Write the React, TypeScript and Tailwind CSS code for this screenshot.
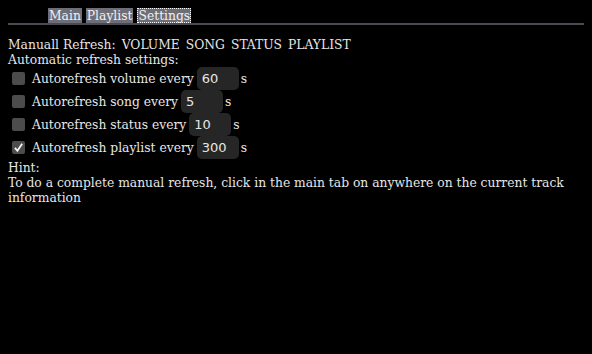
import { useState } from 'react';

type Row = { key: string; label: string; value: string; checked: boolean };

const rows: Row[] = [
  { key: 'volume', label: 'Autorefresh volume every', value: '60', checked: false },
  { key: 'song', label: 'Autorefresh song every', value: '5', checked: false },
  { key: 'status', label: 'Autorefresh status every', value: '10', checked: false },
  { key: 'playlist', label: 'Autorefresh playlist every', value: '300', checked: true },
];

export default function App() {
  const [tab] = useState('Settings');

  return (
    <div className="min-h-[354px] bg-black px-2 pt-2 text-[13.7px] leading-[15px] text-[#e6e6e6] [font-family:'DejaVu_Serif_Condensed','DejaVu_Serif',serif] [font-stretch:condensed]">
      <div className="flex gap-[4px] border-b-2 border-[#4a4a52] pl-10">
        {['Main', 'Playlist', 'Settings'].map((t) => (
          <span
            key={t}
            className={
              'bg-[#6e6e78] px-px leading-[15px] text-[#f0f0f0] ' +
              (t === tab ? 'outline-1 outline-dotted outline-white -outline-offset-1' : '')
            }
          >
            {t}
          </span>
        ))}
      </div>

      <div className="mt-[12px] flex gap-[6px]">
        <span>Manuall Refresh:</span>
        <span>VOLUME</span>
        <span>SONG</span>
        <span>STATUS</span>
        <span>PLAYLIST</span>
      </div>
      <div>Automatic refresh settings:</div>

      <div className="flex flex-col">
        {rows.map((r) => (
          <div key={r.key} className="flex h-[23px] items-center">
            <span className="ml-[4px] mr-[7px] flex h-[13px] w-[13px] items-center justify-center rounded-[2px] bg-[#4c4c4c]">
              {r.checked && (
                <svg viewBox="0 0 12 12" className="h-[11px] w-[11px]">
                  <path d="M2 6.5 L4.8 9.5 L10 2" fill="none" stroke="#f2f2f2" strokeWidth="2" />
                </svg>
              )}
            </span>
            <span>{r.label}</span>
            <span className="ml-[3px] flex h-[23px] w-[42px] items-center rounded-[5px] bg-[#262626] pl-[5px] text-[13px] [font-family:'DejaVu_Sans',sans-serif] [font-stretch:normal]">
              {r.value}
            </span>
            <span className="ml-[2px]">s</span>
          </div>
        ))}
      </div>

      <div className="mt-[1px]">Hint:</div>
      <div>
        To do a complete manual refresh, click in the main tab on anywhere on the current track
        information
      </div>
    </div>
  );
}
